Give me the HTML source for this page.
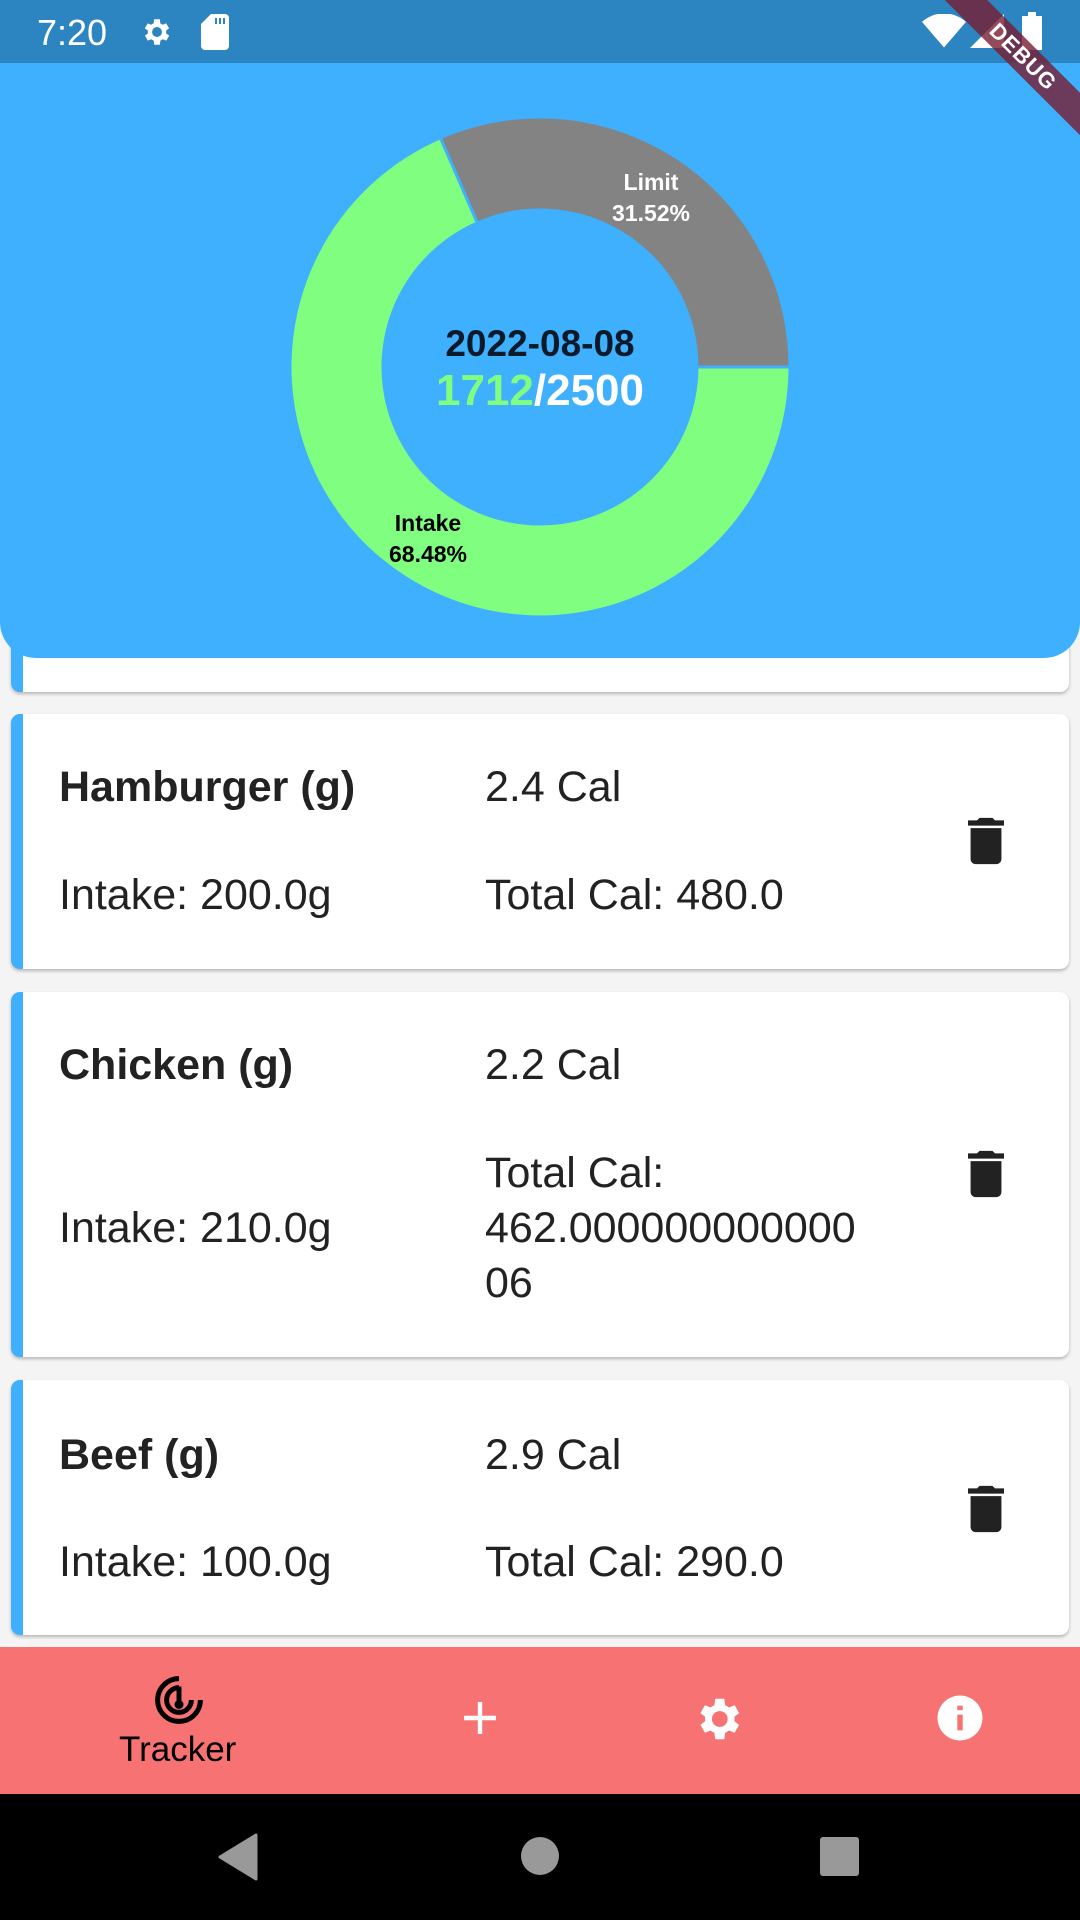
<!DOCTYPE html>
<html><head><meta charset="utf-8"><style>
*{margin:0;padding:0;box-sizing:border-box}
body{width:1080px;height:1920px;overflow:hidden;background:#f4f4f4;font-family:"Liberation Sans",sans-serif;position:relative}
.abs{position:absolute}
.card{position:absolute;left:11px;width:1058px;background:#fff;border-radius:9px;border-left:12px solid #3eb0fd;box-shadow:0 2px 3px rgba(0,0,0,.25)}
.t{position:absolute;font-size:43px;color:#222;white-space:nowrap;line-height:55px}
.b{font-weight:bold}
</style></head><body>
<div class="card" style="top:600px;height:92px"></div>
<div class="card" style="top:714px;height:255px">
 <div class="t b" style="left:36px;top:46px">Hamburger (g)</div>
 <div class="t" style="left:462px;top:46px">2.4 Cal</div>
 <div class="t" style="left:36px;top:154px">Intake: 200.0g</div>
 <div class="t" style="left:462px;top:154px">Total Cal: 480.0</div>
 <svg class="abs" style="left:945px;top:103px" width="36" height="48" viewBox="0 0 14 18"><path d="M1 16c0 1.1.9 2 2 2h8c1.1 0 2-.9 2-2V4H1v12zM14 1h-3.5l-1-1h-5l-1 1H0v2h14V1z" fill="#222"/></svg>
</div>
<div class="card" style="top:992px;height:365px">
 <div class="t b" style="left:36px;top:46px">Chicken (g)</div>
 <div class="t" style="left:462px;top:46px">2.2 Cal</div>
 <div class="t" style="left:36px;top:209px">Intake: 210.0g</div>
 <div class="t" style="left:462px;top:154px">Total Cal:<br>462.000000000000<br>06</div>
 <svg class="abs" style="left:945px;top:158px" width="36" height="48" viewBox="0 0 14 18"><path d="M1 16c0 1.1.9 2 2 2h8c1.1 0 2-.9 2-2V4H1v12zM14 1h-3.5l-1-1h-5l-1 1H0v2h14V1z" fill="#222"/></svg>
</div>
<div class="card" style="top:1380px;height:255px">
 <div class="t b" style="left:36px;top:48px">Beef (g)</div>
 <div class="t" style="left:462px;top:48px">2.9 Cal</div>
 <div class="t" style="left:36px;top:155px">Intake: 100.0g</div>
 <div class="t" style="left:462px;top:155px">Total Cal: 290.0</div>
 <svg class="abs" style="left:945px;top:105px" width="36" height="48" viewBox="0 0 14 18"><path d="M1 16c0 1.1.9 2 2 2h8c1.1 0 2-.9 2-2V4H1v12zM14 1h-3.5l-1-1h-5l-1 1H0v2h14V1z" fill="#222"/></svg>
</div>

<div class="abs" style="left:0;top:0;width:1080px;height:658px;background:#3eb0fd;border-radius:0 0 36px 36px"></div>
<svg class="abs" style="left:0;top:0" width="1080" height="658">
 <path d="M790,367 A250,250 0 0 0 440.3,137.7 L477.4,223 A157,157 0 0 1 697,367 Z" fill="#838383" stroke="#3eb0fd" stroke-width="3"/>
 <path d="M440.3,137.7 A250,250 0 1 0 790,367 L697,367 A157,157 0 1 1 477.4,223 Z" fill="#80fe7f" stroke="#3eb0fd" stroke-width="3"/>
 <text x="651" y="190" font-family="Liberation Sans" font-weight="bold" font-size="23" fill="#fff" text-anchor="middle">Limit</text>
 <text x="651" y="221" font-family="Liberation Sans" font-weight="bold" font-size="23" fill="#fff" text-anchor="middle">31.52%</text>
 <text x="428" y="531" font-family="Liberation Sans" font-weight="bold" font-size="23" fill="#000" text-anchor="middle">Intake</text>
 <text x="428" y="562" font-family="Liberation Sans" font-weight="bold" font-size="23" fill="#000" text-anchor="middle">68.48%</text>
 <text x="540" y="356" font-family="Liberation Sans" font-weight="bold" font-size="37" fill="#0b1a2a" text-anchor="middle">2022-08-08</text>
 <text x="540" y="405" font-family="Liberation Sans" font-weight="bold" font-size="44" fill="#fff" text-anchor="middle"><tspan fill="#80fe7f">1712</tspan>/2500</text>
</svg>

<div class="abs" style="left:0;top:0;width:1080px;height:63px;background:#2c84c0"></div>
<div class="abs" style="left:37px;top:12px;font-size:36px;color:#fff">7:20</div>
<svg class="abs" style="left:140px;top:15px" width="34" height="34" viewBox="0 0 24 24"><path fill="#fff" d="M19.4 13a7.5 7.5 0 000-2l2.1-1.6-2-3.5-2.5 1a7 7 0 00-1.7-1L15 3h-4l-.4 2.9a7 7 0 00-1.7 1l-2.5-1-2 3.5L6.6 11a7.5 7.5 0 000 2l-2.1 1.6 2 3.5 2.5-1a7 7 0 001.7 1L11 21h4l.4-2.9a7 7 0 001.7-1l2.5 1 2-3.5zM13 15.5a3.5 3.5 0 110-7 3.5 3.5 0 010 7z" transform="translate(-1 0)"/></svg>
<svg class="abs" style="left:201px;top:14px" width="28" height="36" viewBox="0 0 14 18"><path fill="#fff" d="M5 0h7a2 2 0 012 2v14a2 2 0 01-2 2H2a2 2 0 01-2-2V5zM7 2v3h1V2zM9 2v3h1V2zM11 2v3h1V2z"/></svg>
<svg class="abs" style="left:922px;top:14px" width="44" height="34" viewBox="0 0 24 18"><path fill="#fff" d="M0 4a18 18 0 0124 0L12 18z"/></svg>
<svg class="abs" style="left:970px;top:14px" width="34" height="34" viewBox="0 0 20 20"><path fill="#fff" d="M20 0v20H0z"/></svg>
<svg class="abs" style="left:1022px;top:12px" width="20" height="38" viewBox="0 0 10 19"><path fill="#fff" d="M3 0h4v2h3v17H0V2h3z"/></svg>
<div class="abs" style="left:918px;top:42px;width:210px;height:30px;background:rgba(120,30,50,.8);transform:rotate(45deg);color:#fff;font-weight:bold;font-size:22px;text-align:center;line-height:30px;letter-spacing:1px">DEBUG</div>

<div class="abs" style="left:0;top:1647px;width:1080px;height:147px;background:#f77373"></div>
<svg class="abs" style="left:152px;top:1673px" width="54" height="54" viewBox="0 0 24 24"><g fill="none" stroke="#000" stroke-width="2.2"><path d="M12 2.5a9.5 9.5 0 109.5 9.5"/><path d="M12 6.5a5.5 5.5 0 105.5 5.5"/><path d="M12 6v8"/></g><circle cx="12" cy="14" r="2" fill="#000"/></svg>
<div class="abs" style="left:119px;top:1730px;font-size:35px;color:#000">Tracker</div>
<svg class="abs" style="left:456px;top:1694px" width="48" height="48" viewBox="0 0 24 24"><path d="M12 4v16M4 12h16" stroke="#fff" stroke-width="2.2"/></svg>
<svg class="abs" style="left:692px;top:1692px" width="56" height="54" viewBox="0 0 24 24"><path fill="#fff" d="M19.4 13a7.5 7.5 0 000-2l2.1-1.6-2-3.5-2.5 1a7 7 0 00-1.7-1L14.9 3h-4l-.4 2.9a7 7 0 00-1.7 1l-2.5-1-2 3.5L6.4 11a7.5 7.5 0 000 2l-2.1 1.6 2 3.5 2.5-1a7 7 0 001.7 1l.4 2.9h4l.4-2.9a7 7 0 001.7-1l2.5 1 2-3.5zM12.9 15.5a3.5 3.5 0 110-7 3.5 3.5 0 010 7z" transform="translate(-1 0)"/></svg>
<svg class="abs" style="left:933px;top:1691px" width="54" height="54" viewBox="0 0 24 24"><circle cx="12" cy="12" r="10" fill="#fff"/><path d="M12 10.5v7M12 6.5v2" stroke="#f77373" stroke-width="2.4"/></svg>

<div class="abs" style="left:0;top:1794px;width:1080px;height:126px;background:#000"></div>
<svg class="abs" style="left:218px;top:1833px" width="40" height="48" viewBox="0 0 40 48"><path d="M38 2v44L2 24z" fill="#999" stroke="#999" stroke-width="3" stroke-linejoin="round"/></svg>
<div class="abs" style="left:521px;top:1837px;width:38px;height:38px;border-radius:50%;background:#999"></div>
<div class="abs" style="left:820px;top:1837px;width:39px;height:39px;border-radius:3px;background:#999"></div>
</body></html>
